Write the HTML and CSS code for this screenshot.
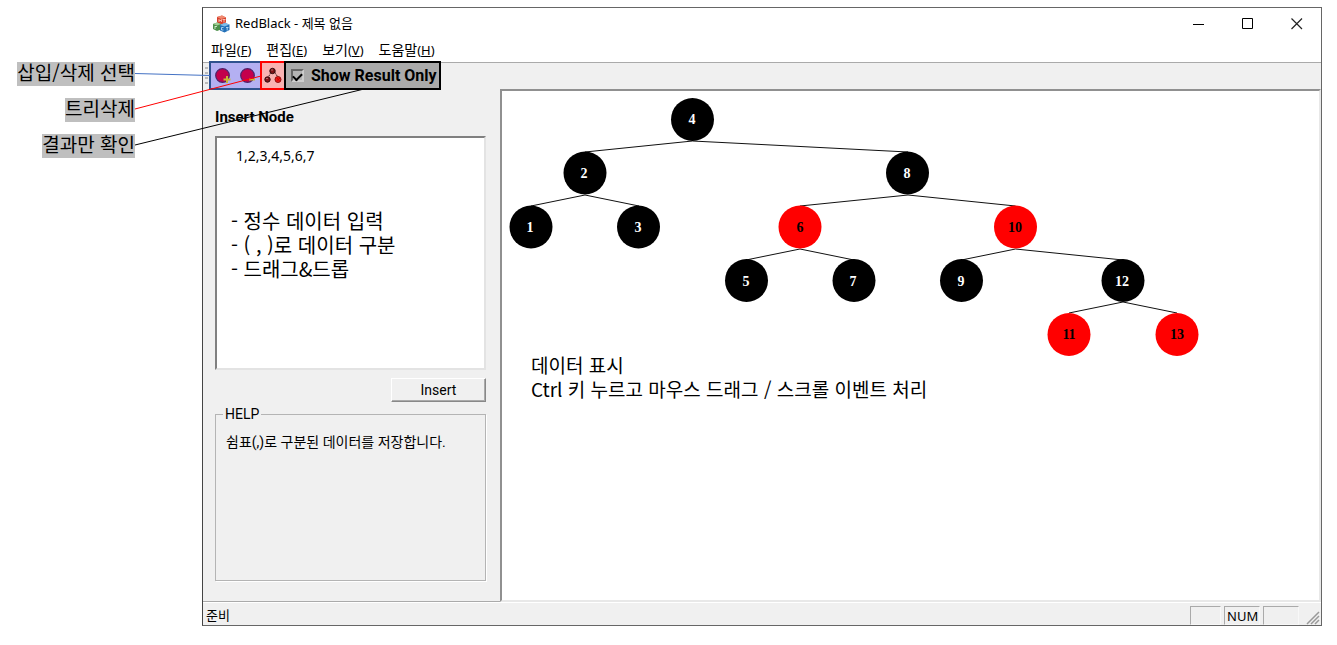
FILE: index.html
```html
<!DOCTYPE html>
<html lang="ko">
<head>
<meta charset="utf-8">
<title>RedBlack - 제목 없음</title>
<link rel="stylesheet" href="styles.css">
</head>
<body>
<div class="page">
  <aside class="callouts">
    <span class="callout">삽입/삭제 선택</span>
    <span class="callout">트리삭제</span>
    <span class="callout">결과만 확인</span>
  </aside>

  <div class="window">
    <header class="titlebar">
      <svg class="app-icon" width="18" height="18" viewBox="0 0 18 18" aria-hidden="true">
        <path d="M5 2l5-1.500 4 2v5l-5 2-4-2z" fill="#d8402c"/>
        <path d="M5 2l5-1.500 4 2-5 1.500z" fill="#f08a70"/>
        <path d="M7 7V4.500l1.200 1.500 1.200-1.500V7M10.500 4.500h3M12 4.500v3" stroke="#ffd8cc" stroke-width=".8" fill="none"/>
        <path d="M1 9l4-1.500 4 1.500v5.500l-4 1.500-4-2z" fill="#4c8f4a"/>
        <path d="M1 9l4-1.500 4 1.500-4 1.500z" fill="#a3cf96"/>
        <path d="M3 11v3M3 11.500h2" stroke="#e4f5dd" stroke-width=".8" fill="none"/>
        <path d="M8 10l5-2 4.500 1.500v5.500l-5 2.500-4.500-2z" fill="#2270b8"/>
        <path d="M8 10l5-2 4.500 1.500-5 2z" fill="#80bce8"/>
        <path d="M11.500 12.500h-2v2.500h2M14 12.500h2.500M15.200 12.500v3" stroke="#c8e4fa" stroke-width=".8" fill="none"/>
      </svg>
      <h1 class="title">RedBlack - 제목 없음</h1>
      <div class="caption-buttons">
        <button class="caption" aria-label="최소화"><svg width="12" height="12"><path d="M0 6.500h11" stroke="#000"/></svg></button>
        <button class="caption" aria-label="최대화"><svg width="12" height="12"><path d="M.5.5h10v10H.5z" fill="none" stroke="#000"/></svg></button>
        <button class="caption" aria-label="닫기"><svg width="12" height="12"><path d="M.5.5l10.500 10.500M11 .5L.5 11" stroke="#222" stroke-width="1.200"/></svg></button>
      </div>
    </header>

    <nav class="menubar">
      <button class="menu">파일<span class="key">(<u>F</u>)</span></button>
      <button class="menu">편집<span class="key">(<u>E</u>)</span></button>
      <button class="menu">보기<span class="key">(<u>V</u>)</span></button>
      <button class="menu">도움말<span class="key">(<u>H</u>)</span></button>
    </nav>

    <div class="toolbar">
      <span class="grip"></span>
      <div class="group group-blue">
        <button class="tool" aria-label="삽입"><svg width="18" height="18" viewBox="0 0 18 18"><circle cx="8.500" cy="8.500" r="6.800" fill="#c4004c" stroke="#502068" stroke-width="1.200"/><path d="M13 9v7M9.500 12.500h7" stroke="#c8b832" stroke-width="2"/></svg></button>
        <button class="tool" aria-label="삭제"><svg width="18" height="18" viewBox="0 0 18 18"><circle cx="8.500" cy="8.500" r="6.800" fill="#c4004c" stroke="#502068" stroke-width="1.200"/><path d="M10 12.500h6" stroke="#c8b832" stroke-width="2"/></svg></button>
      </div>
      <div class="group group-red">
        <button class="tool" aria-label="트리 삭제"><svg width="18" height="18" viewBox="0 0 18 18"><path d="M7 5l-3 6M10.500 5l4 6" stroke="#402020" stroke-dasharray="2 1"/><circle cx="8.500" cy="4" r="2.700" fill="#801418" stroke="#300c10"/><circle cx="3.500" cy="12.500" r="2.700" fill="#801418" stroke="#300c10"/><circle cx="14" cy="12.500" r="3" fill="#f01818" stroke="#901010"/><path d="M7.500 3h1M2.500 11.500h1" stroke="#f4b4b4"/><path d="M12.500 10.500l3.500 4M16 11l-3.500 3" stroke="#c00"/></svg></button>
      </div>
      <label class="group group-dark"><input class="check" type="checkbox" checked>Show Result Only</label>
    </div>

    <main class="workspace">
      <section class="sidebar">
        <label class="heading" for="nodes">Insert Node</label>
        <div class="editor">
          <textarea class="nodes" id="nodes" spellcheck="false">1,2,3,4,5,6,7</textarea>
          <div class="note editor-note"><div>- 정수 데이터 입력</div><div>- ( , )로 데이터 구분</div><div>- 드래그&amp;드롭</div></div>
        </div>
        <button class="insert">Insert</button>
        <fieldset class="help">
          <legend>HELP</legend>
          쉼표(,)로 구분된 데이터를 저장합니다.
        </fieldset>
      </section>

      <section class="canvas">
        <svg class="tree" width="700" height="262" viewBox="502 91 700 262" role="img" aria-label="레드블랙 트리">
          <path class="edges" d="M585 152L692.500 141L908 152M531 206L585 195L639 206M800 206L908 195L1015.500 206M746 260L800 249L854 260M961.500 260L1015.500 249L1123 260M1069 313L1123 302L1177 313"/>
          <g class="black">
            <circle cx="692.500" cy="119.500" r="21.500"/><circle cx="585" cy="173" r="21.500"/><circle cx="907.500" cy="173" r="21.500"/><circle cx="531" cy="227" r="21.500"/><circle cx="638.500" cy="227" r="21.500"/><circle cx="746.500" cy="280.500" r="21.500"/><circle cx="854" cy="280.500" r="21.500"/><circle cx="961.500" cy="280.500" r="21.500"/><circle cx="1123" cy="280.500" r="21.500"/>
          </g>
          <g class="red">
            <circle cx="800" cy="227" r="21.500"/><circle cx="1015.500" cy="227" r="21.500"/><circle cx="1069" cy="334.500" r="21.500"/><circle cx="1177" cy="334.500" r="21.500"/>
          </g>
          <g class="label-light">
            <text x="692" y="124">4</text><text x="584" y="178">2</text><text x="907" y="178">8</text><text x="530" y="232">1</text><text x="638" y="232">3</text><text x="746" y="286">5</text><text x="853" y="286">7</text><text x="961" y="286">9</text><text x="1122" y="286">12</text>
          </g>
          <g class="label-dark">
            <text x="800" y="232">6</text><text x="1015" y="232">10</text><text x="1069" y="339">11</text><text x="1177" y="339">13</text>
          </g>
        </svg>
        <div class="note canvas-note"><div>데이터 표시</div><div>Ctrl 키 누르고 마우스 드래그 / 스크롤 이벤트 처리</div></div>
      </section>
    </main>

    <footer class="statusbar">
      <span class="status">준비</span>
      <span class="pane pane-small"></span>
      <span class="pane">NUM</span>
      <span class="pane"></span>
      <svg class="sizegrip" width="14" height="14" aria-hidden="true"><path d="M1 13L13 1M5 13l8-8M9 13l4-4" stroke="#999" stroke-width="1.500"/></svg>
    </footer>
  </div>

  <svg class="leaders" width="450" height="160" aria-hidden="true">
    <path d="M135 73.500L210 75.500" stroke="#4472c4"/>
    <path d="M135 109L261 76" stroke="#f00"/>
    <path d="M135 145L362 89.500" stroke="#000"/>
  </svg>
</div>
</body>
</html>
```
FILE: styles.css
```css
* { box-sizing: border-box; }
body {
  margin: 0;
  background: #fff;
  color: #000;
  font-family: "Noto Sans", "Noto Sans CJK KR", sans-serif;
  font-size: 13px;
}
button {
  border: 0;
  padding: 0;
  background: none;
  color: inherit;
  font: inherit;
}
.page {
  position: relative;
  display: flex;
  min-height: 100vh;
  padding: 7px 15px 19px 0;
}
.callouts {
  flex: 0 0 202px;
  display: flex;
  flex-direction: column;
  align-items: flex-end;
  gap: 12px;
  padding: 55px 67px 0 0;
}
.callout {
  padding-bottom: 4px;
  background: #bfbfbf;
  font: 19px/20px "Noto Sans CJK KR", sans-serif;
  white-space: nowrap;
}
.leaders {
  position: absolute;
  top: 0;
  left: 0;
  fill: none;
  pointer-events: none;
}
.window {
  flex: 1;
  min-width: 0;
  display: flex;
  flex-direction: column;
  border: 1px solid #666;
  border-left-color: #444;
  background: #f0f0f0;
}
.titlebar {
  display: flex;
  align-items: center;
  height: 32px;
  padding-left: 9px;
  gap: 5px;
  background: #fff;
}
.title {
  flex: 1;
  margin: 0;
  font-size: 13px;
  font-weight: 400;
  line-height: 18px;
  padding-bottom: 2px;
}
.caption-buttons { display: flex; }
.caption {
  display: grid;
  place-items: center;
  width: 49px;
  height: 32px;
}
.menubar {
  display: flex;
  gap: 15px;
  height: 22px;
  padding: 0 0 2px 8px;
  background: #fff;
  font-size: 14px;
  line-height: 20px;
}
.key { font-size: 13px; }
.toolbar {
  display: flex;
  align-items: flex-start;
  height: 27px;
  border-top: 1px solid #aaa;
}
.grip {
  width: 3px;
  height: 20px;
  margin: 4px 1px 0 2px;
  background: repeating-linear-gradient(#bbb 0 2px, transparent 2px 5px);
}
.group {
  display: flex;
  align-items: center;
  height: 29px;
  margin-top: -2px;
  border: 2px solid;
}
.group-blue {
  gap: 7px;
  padding: 0 3px;
  border-color: #2f528f;
  border-right: 0;
  background: #b4b0f2;
}
.group-red {
  padding: 0 2px;
  border-color: #f00;
  border-right: 0;
  background: #fab2b2;
}
.group-dark {
  gap: 7px;
  padding: 0 2px 0 5px;
  border-color: #000;
  background: #aaa;
  font: bold 16px Roboto, sans-serif;
}
.tool {
  display: grid;
  width: 18px;
  height: 18px;
}
.check {
  appearance: none;
  display: grid;
  place-items: center;
  width: 13px;
  height: 13px;
  margin: 0;
  border: 2px solid;
  border-color: #666 #ccc #ccc #666;
  background: #b4b4b4;
}
.check:checked::before {
  content: "";
  width: 7px;
  height: 4px;
  border: solid #000;
  border-width: 0 0 2px 2px;
  transform: rotate(-45deg);
}
.workspace {
  flex: 1;
  display: flex;
  min-height: 0;
}
.sidebar {
  flex: 0 0 297px;
  display: flex;
  flex-direction: column;
  padding: 19px 14px 20px 12px;
  border-bottom: 1px solid #aaa;
  font-family: Roboto, "Noto Sans CJK KR", sans-serif;
}
.heading {
  margin-bottom: 10px;
  font-size: 15px;
  font-weight: 700;
  line-height: 18px;
}
.editor {
  position: relative;
  display: flex;
  height: 234px;
}
.nodes {
  flex: 1;
  min-width: 0;
  margin: 0;
  padding: 8px 19px;
  border: 2px solid;
  border-color: #808080 #e3e3e3 #e3e3e3 #808080;
  outline: 0;
  resize: none;
  background: #fff;
  color: #000;
  font: 14px/20px "Noto Sans", sans-serif;
}
.note {
  margin: 0;
  font: 19px/24px "Noto Sans CJK KR", sans-serif;
}
.editor-note {
  position: absolute;
  top: 73px;
  left: 16px;
  font-size: 20px;
  pointer-events: none;
}
.insert {
  align-self: flex-end;
  width: 95px;
  height: 24px;
  margin: 8px 0 4px;
  border: 1px solid;
  border-color: #fff #888 #888 #fff;
  box-shadow: inset -1px -1px #aaa;
  font-size: 14px;
}
.help {
  flex: 1;
  min-width: 0;
  margin: 0;
  padding: 9px 10px;
  border: 1px solid #b4b4b4;
  box-shadow: 1px 1px #fff;
  font-size: 14px;
}
.help legend {
  margin-left: -3px;
  padding: 0 2px;
  font-size: 14px;
}
.canvas {
  flex: 1;
  min-width: 0;
  border: 2px solid;
  border-color: #909090 #e8e8e8 #e8e8e8 #909090;
  background: #fff;
}
.tree {
  display: block;
  overflow: visible;
}
.edges {
  fill: none;
  stroke: #111;
}
.black { fill: #000; }
.red { fill: #f00; }
.label-light,
.label-dark {
  font: bold 14px "Liberation Serif", serif;
  text-anchor: middle;
}
.label-light { fill: #fff; }
.label-dark { fill: #000; }
.canvas-note { padding-left: 29px; }
.statusbar {
  display: flex;
  gap: 3px;
  height: 23px;
  padding: 3px 1px 0 3px;
  border-top: 1px solid #fff;
  line-height: 18px;
}
.status { flex: 1; }
.pane {
  width: 36px;
  padding-left: 2px;
  border: 1px solid;
  border-color: #aaa #f8f8f8 #f8f8f8 #aaa;
}
.pane-small { width: 31px; }
.sizegrip {
  align-self: flex-end;
  margin-left: 4px;
}
```
